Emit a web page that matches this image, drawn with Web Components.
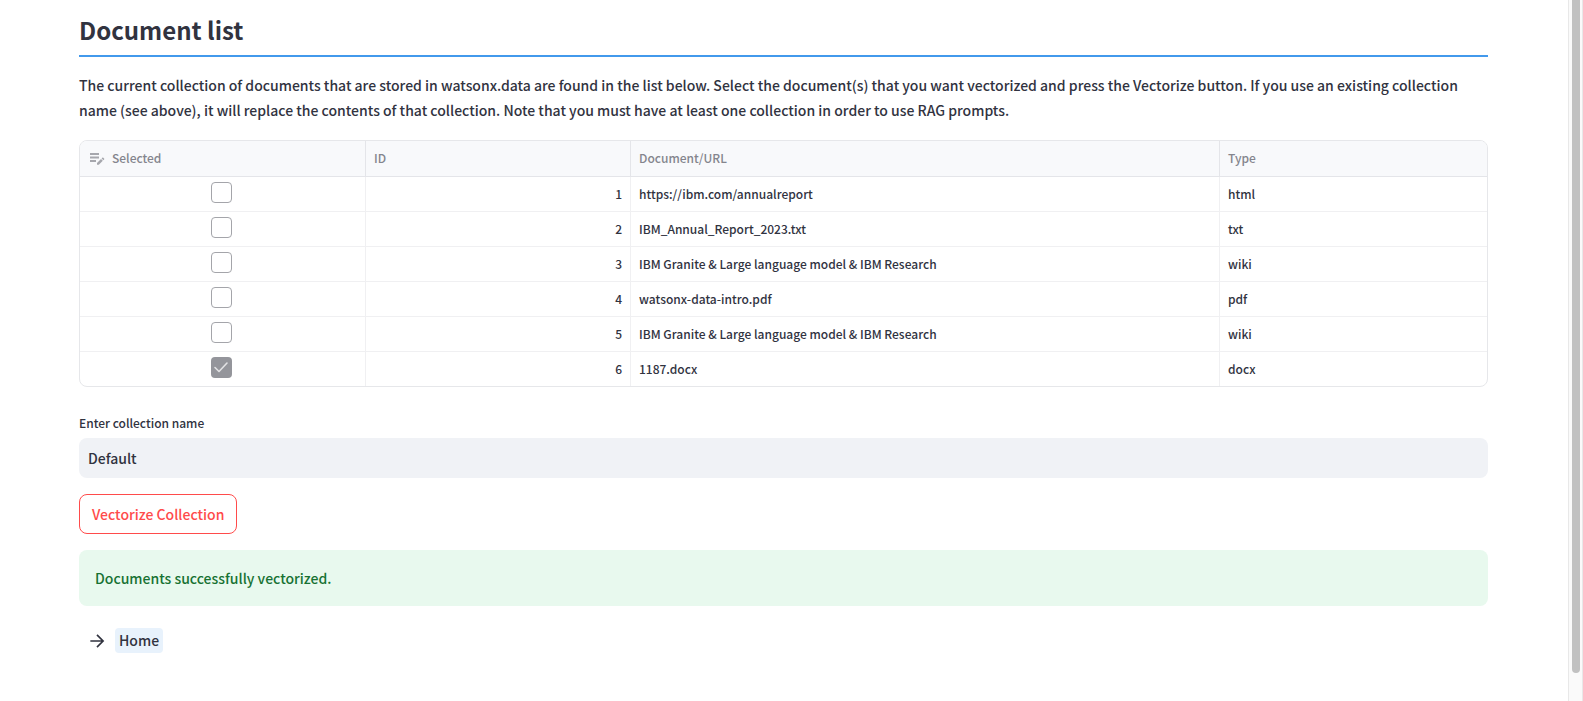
<!DOCTYPE html>
<html lang="en">
<head>
<meta charset="utf-8">
<title>Document list</title>
<style>
  html, body { margin: 0; }
  body { background: #fff; color: #31333f; font: 500 14px/25px "Noto Sans CJK SC", "Noto Sans", sans-serif; }
</style>
</head>
<body>
<app-shell>
  <section-heading>Document list</section-heading>
  <body-text>The current collection of documents that are stored in watsonx.data are found in the list below. Select the document(s) that you want vectorized and press the Vectorize button. If you use an existing collection name (see above), it will replace the contents of that collection. Note that you must have at least one collection in order to use RAG prompts.</body-text>
  <document-table></document-table>
  <text-field label="Enter collection name" value="Default"></text-field>
  <action-button>Vectorize Collection</action-button>
  <success-alert>Documents successfully vectorized.</success-alert>
  <page-link href="#home">Home</page-link>
</app-shell>
<script>
  const define = (name, markup, setup) => {
    const template = document.createElement('template');
    template.innerHTML = markup;
    customElements.define(name, class extends HTMLElement {
      constructor() {
        super();
        this.attachShadow({ mode: 'open' }).append(template.content.cloneNode(true));
      }
      connectedCallback() { if (setup) setup(this, this.shadowRoot); }
    });
  };

  define('app-shell', `
    <style>
      :host { display: grid; grid-template-columns: minmax(0, 1fr) 15px; min-height: 100vh; }
      main { display: flex; flex-direction: column; padding: 8px 80px 48px 79px; }
      .track { box-sizing: border-box; background: #fafafa; border: solid #e8e8e8; border-width: 0 1px; padding: 0 2px 0 3px; }
      .thumb { height: 96vh; background: #c1c1c1; border-radius: 0 0 4px 4px; }
    </style>
    <main><slot></slot></main>
    <div class="track"><div class="thumb"></div></div>`);

  define('section-heading', `
    <style>
      :host { display: block; border-bottom: 2px solid #4299ec; }
      h2 { margin: 0; padding-bottom: 3px; font-size: 24px; line-height: 44px; font-weight: 700; }
    </style>
    <h2><slot></slot></h2>`);

  define('body-text', `
    <style>
      :host { display: block; margin-top: 16px; }
      p { margin: 0; }
    </style>
    <p><slot></slot></p>`);

  define('document-table', `
    <style>
      :host { display: block; margin-top: 17px; border: 1px solid #e6e7ea; border-radius: 8px; overflow: hidden; font-size: 12px; line-height: 20px; }
      table { width: 100%; border-collapse: separate; border-spacing: 0; table-layout: fixed; }
      .selected { width: 286px; } .id { width: 265px; } .type { width: 267px; }
      th, td { box-sizing: border-box; height: 35px; padding: 0 8px 1px; text-align: left; border: solid #f0f0f2; border-width: 0 1px 1px 0; }
      th { height: 36px; background: #f8f9fb; color: #84858d; font-weight: 500; border-color: #e4e5e9; }
      tr > :last-child { border-right: 0; }
      tbody tr:last-child td { height: 34px; border-bottom: 0; }
      .num { text-align: right; }
      td.pick { padding: 0 10px 4px 8px; }
      .head { display: flex; align-items: center; gap: 6px; }
      svg { display: block; width: 18px; height: 18px; fill: #a6a7ad; }
      input { appearance: none; display: block; box-sizing: border-box; width: 21px; height: 21px; margin: 0 auto; border: 1px solid #a4a5aa; border-radius: 4px; background: #fff; }
      input:checked { border: 0; background: #94959b url("data:image/svg+xml,%3Csvg xmlns='http://www.w3.org/2000/svg' viewBox='0 0 21 21'%3E%3Cpath d='M4 10.5l4 4L16 6' fill='none' stroke='%23e2e2e4' stroke-width='1.6' stroke-linecap='round' stroke-linejoin='round'/%3E%3C/svg%3E"); }
    </style>
    <table>
      <colgroup><col class="selected"><col class="id"><col><col class="type"></colgroup>
      <thead><tr>
        <th scope="col"><span class="head"><svg viewBox="0 0 18 18" aria-hidden="true"><path d="M2 4h9v2H2zM2 7.500h9v2H2zM2 11h6v2H2z"/><path d="M9 14v1.800h1.800l4-4-1.800-1.800zM15.400 11.200l.7-.7c.3-.3.300-.7 0-1l-.8-.8c-.3-.3-.7-.3-1 0l-.7.7z"/></svg>Selected</span></th>
        <th scope="col">ID</th><th scope="col">Document/URL</th><th scope="col">Type</th>
      </tr></thead>
      <tbody></tbody>
    </table>`, (host, root) => {
    const rows = [
      ['https://ibm.com/annualreport', 'html'],
      ['IBM_Annual_Report_2023.txt', 'txt'],
      ['IBM Granite & Large language model & IBM Research', 'wiki'],
      ['watsonx-data-intro.pdf', 'pdf'],
      ['IBM Granite & Large language model & IBM Research', 'wiki'],
      ['1187.docx', 'docx', true],
    ];
    const body = root.querySelector('tbody');
    rows.forEach(([name, type, checked], i) => {
      const tr = body.insertRow();
      const pick = tr.insertCell();
      pick.className = 'pick';
      const box = document.createElement('input');
      box.type = 'checkbox';
      box.checked = !!checked;
      box.setAttribute('aria-label', 'Select ' + name);
      pick.append(box);
      const id = tr.insertCell();
      id.className = 'num';
      id.textContent = i + 1;
      tr.insertCell().textContent = name;
      tr.insertCell().textContent = type;
    });
  });

  define('text-field', `
    <style>
      :host { display: flex; flex-direction: column; gap: 4px; margin-top: 24px; }
      label { font-size: 12px; line-height: 23px; }
      input { box-sizing: border-box; width: 100%; height: 40px; margin: 0; padding: 0 9px; border: 0; border-radius: 8px; background: #f0f2f6; color: inherit; font: inherit; }
    </style>
    <label for="field"></label><input id="field" type="text">`, (host, root) => {
    root.querySelector('label').textContent = host.getAttribute('label');
    root.querySelector('input').value = host.getAttribute('value');
  });

  define('action-button', `
    <style>
      :host { display: block; margin-top: 16px; }
      button { display: block; height: 40px; margin: 0; padding: 0 12px; border: 1px solid #ff4b4b; border-radius: 8px; background: #fff; color: #ff4b4b; font: inherit; }
    </style>
    <button type="button"><slot></slot></button>`);

  define('success-alert', `
    <style>
      :host { display: block; margin-top: 16px; }
      div { box-sizing: border-box; min-height: 56px; padding: 16px; border-radius: 8px; background: #e8f9ee; color: #177233; line-height: 24px; }
    </style>
    <div role="status"><slot></slot></div>`);

  define('page-link', `
    <style>
      :host { display: block; margin-top: 22px; }
      a { display: inline-flex; align-items: center; gap: 8px; margin-left: 8px; color: inherit; text-decoration: none; }
      svg { width: 20px; height: 20px; fill: none; stroke: currentColor; stroke-width: 2; }
      span { padding: 0 4px; border-radius: 4px; background: #e8f2fc; }
    </style>
    <a><svg viewBox="0 0 24 24" aria-hidden="true"><path d="M4 12h15M12 4.700l7.300 7.300-7.300 7.300"/></svg><span><slot></slot></span></a>`, (host, root) => {
    root.querySelector('a').setAttribute('href', host.getAttribute('href'));
  });
</script>
</body>
</html>
